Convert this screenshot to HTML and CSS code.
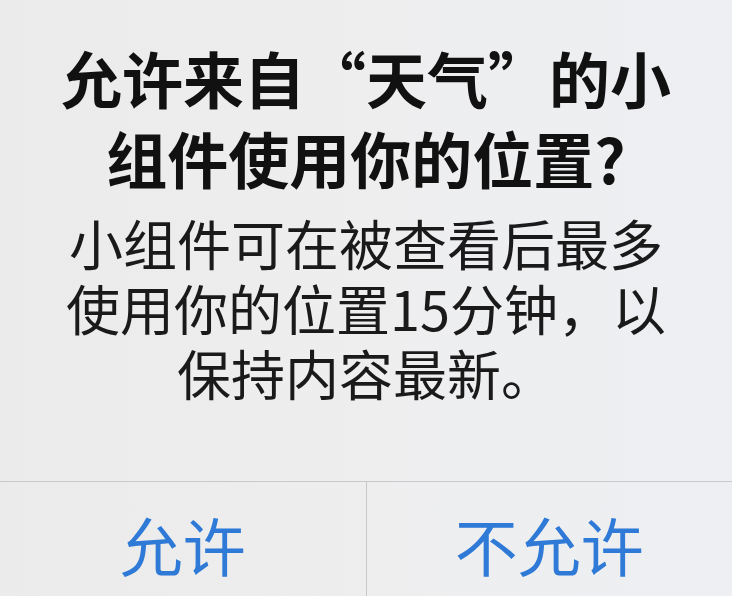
FILE: index.html
```html
<!DOCTYPE html>
<html lang="zh-CN">
<head>
    <meta charset="UTF-8">
    <meta name="viewport" content="width=device-width, initial-scale=1.0">
    <title>位置权限</title>
    <link rel="stylesheet" href="styles.css">
</head>
<body>
    <div class="alert">
        <div class="alert-content">
            <h2 class="alert-title">允许来自“天气”的小<br>组件使用你的位置?</h2>
            <p class="alert-message">小组件可在被查看后最多<br>使用你的位置15分钟，以<br>保持内容最新。</p>
        </div>
        <div class="alert-actions">
            <button class="alert-btn">允许</button>
            <button class="alert-btn">不允许</button>
        </div>
    </div>
</body>
</html>
```

FILE: styles.css
```css
body {
    margin: 0;
    font-family: "Noto Sans CJK SC", "Noto Sans", sans-serif;
    background-color: #ededed;
}
.alert {
    width: 732px;
    height: 596px;
    display: flex;
    flex-direction: column;
    background: linear-gradient(90deg, #ebebeb 0%, #eeeeef 50%, #edeff2 100%);
}
.alert-content {
    height: 481px;
    padding-top: 38px;
    box-sizing: border-box;
    text-align: center;
}
.alert-title {
    margin: 0;
    font-size: 61px;
    line-height: 80px;
    font-weight: 700;
    color: #111;
}
.alert-message {
    margin: 12px 0 0;
    font-size: 54px;
    line-height: 65px;
    font-weight: 400;
    color: #1a1a1a;
}
.alert-actions {
    flex: 1;
    display: flex;
    border-top: 1px solid #c9c9cb;
}
.alert-btn {
    flex: 1;
    background: none;
    border: none;
    font-family: inherit;
    font-size: 63px;
    color: #2f7ad6;
    padding: 8px 0 0;
    cursor: pointer;
}
.alert-btn + .alert-btn {
    border-left: 1px solid #c9c9cb;
}
```
